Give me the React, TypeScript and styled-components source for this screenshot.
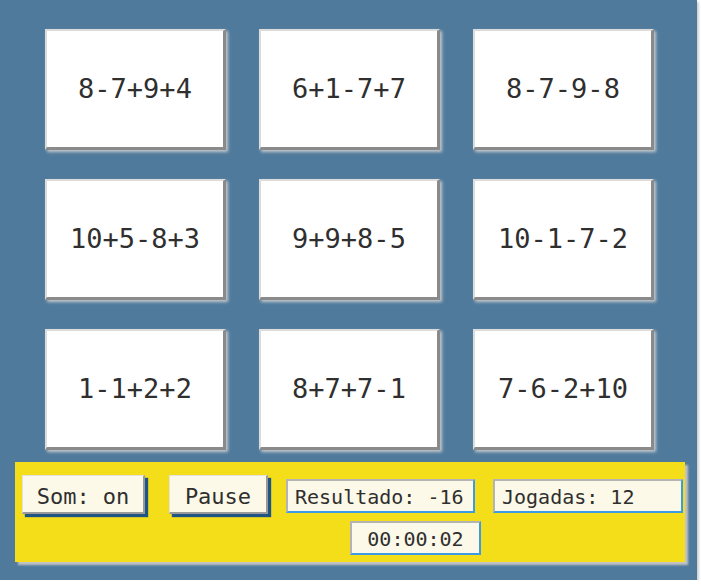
import React from "react";
import styled, { createGlobalStyle } from "styled-components";

const Global = createGlobalStyle`
  html, body { margin: 0; padding: 0; background: #ffffff; }
  body { font-family: "DejaVu Sans Mono", "Liberation Mono", monospace; }
`;

const Board = styled.div`
  width: 697px;
  height: 580px;
  background: #4f7a9c;
  box-shadow: 2px 2px 2px #d0d0d0;
  box-sizing: border-box;
  padding-top: 29px;
  display: flex;
  flex-direction: column;
`;

const Grid = styled.div`
  display: grid;
  grid-template-columns: repeat(3, 181px);
  grid-auto-rows: 121px;
  column-gap: 33px;
  row-gap: 29px;
  margin-left: 45px;
`;

const Card = styled.div`
  box-sizing: border-box;
  background: #ffffff;
  border-style: solid;
  border-color: #dcdcdc #8a8a8a #8a8a8a #dcdcdc;
  border-width: 2px 3px 3px 2px;
  box-shadow: 2px 2px 3px rgba(210, 210, 210, 0.9);
  display: flex;
  align-items: center;
  justify-content: center;
  font-family: "DejaVu Sans Mono", monospace;
  font-size: 27px;
  color: #2f2f2f;
  padding-bottom: 2px;
`;

const Panel = styled.div`
  margin: 12px 0 0 15px;
  width: 670px;
  height: 100px;
  box-sizing: border-box;
  background: #f4de1a;
  box-shadow: 3px 3px 2px #c4c4c4;
  padding: 13px 0 0 7px;
  display: flex;
  flex-direction: column;
`;

const TopRow = styled.div`
  display: flex;
  align-items: flex-start;
`;

const Button = styled.div<{ $w: number; $gap: number }>`
  box-sizing: border-box;
  width: ${(p) => p.$w}px;
  height: 39px;
  margin-right: ${(p) => p.$gap}px;
  background: #fdf9e8;
  border-style: solid;
  border-color: #e2e2e2 #9a9a9a #9a9a9a #e2e2e2;
  border-width: 1px 2px 2px 1px;
  box-shadow: 3px 3px 1px #1e5582;
  display: flex;
  align-items: center;
  justify-content: center;
  font-size: 22px;
  color: #2f2f2f;
  padding-top: 4px;
`;

const Info = styled.div<{ $w: number; $gap?: number; $mt?: number }>`
  box-sizing: border-box;
  width: ${(p) => p.$w}px;
  height: 34px;
  margin-right: ${(p) => p.$gap ?? 0}px;
  margin-top: ${(p) => p.$mt ?? 0}px;
  background: #fdf9e8;
  border-style: solid;
  border-color: #b4b4b4 #3c9be2 #3c9be2 #b4b4b4;
  border-width: 2px 2px 2px 2px;
  display: flex;
  align-items: center;
  font-size: 20px;
  color: #2f2f2f;
  padding-left: 7px;
  padding-top: 2px;
`;

const Timer = styled(Info)`
  justify-content: center;
  padding-left: 0;
  margin-left: 328px;
`;

const exprs = [
  "8-7+9+4",
  "6+1-7+7",
  "8-7-9-8",
  "10+5-8+3",
  "9+9+8-5",
  "10-1-7-2",
  "1-1+2+2",
  "8+7+7-1",
  "7-6-2+10",
];

export default function App() {
  return (
    <>
      <Global />
      <Board>
        <Grid>
          {exprs.map((e) => (
            <Card key={e}>{e}</Card>
          ))}
        </Grid>
        <Panel>
          <TopRow>
            <Button $w={123} $gap={24}>Som: on</Button>
            <Button $w={99} $gap={18}>Pause</Button>
            <Info $w={189} $gap={18} $mt={4}>Resultado: -16</Info>
            <Info $w={190} $mt={4}>Jogadas: 12</Info>
          </TopRow>
          <Timer $w={131} $mt={7}>00:00:02</Timer>
        </Panel>
      </Board>
    </>
  );
}
